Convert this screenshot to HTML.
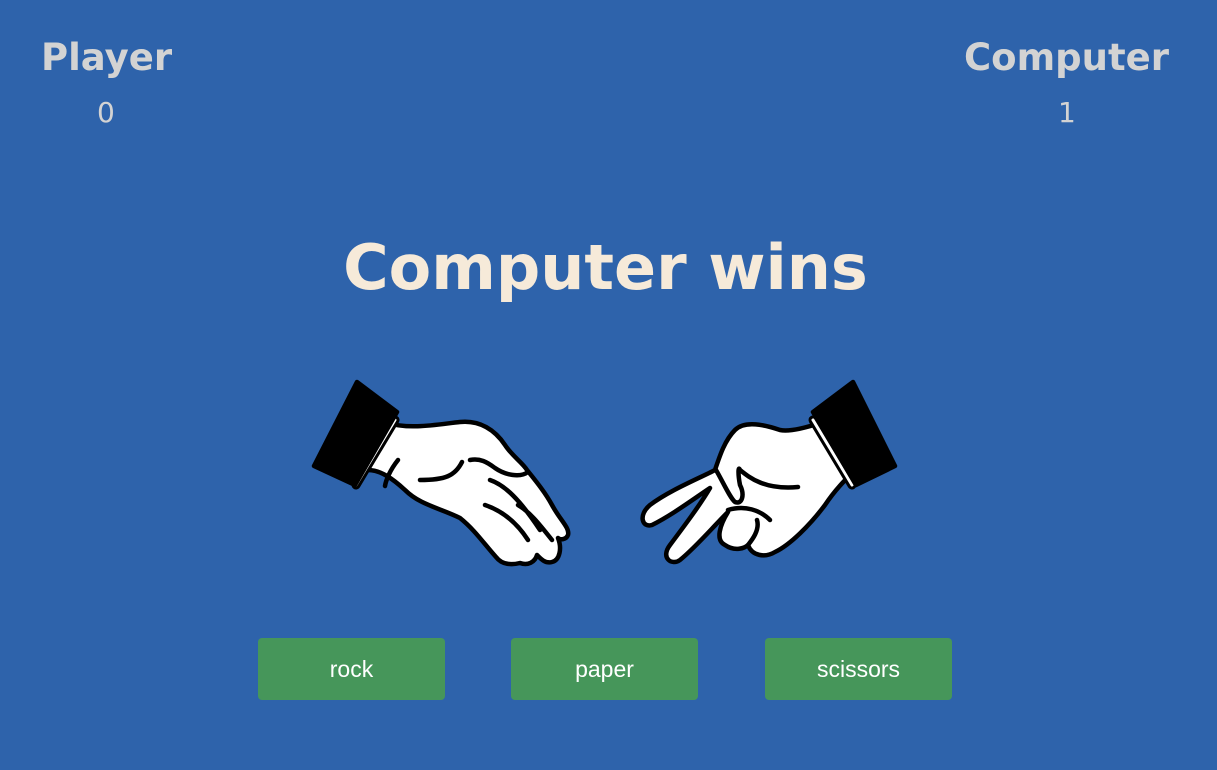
<!DOCTYPE html>
<html><head><meta charset="utf-8"><style>
html,body{margin:0;padding:0;width:1217px;height:770px;background:#2e63ab;overflow:hidden;font-family:"DejaVu Sans","Liberation Sans",sans-serif;}
.lbl{position:absolute;color:#d3d3d3;font-weight:bold;font-size:37px;line-height:1;top:39px;}
.sc{position:absolute;color:#d3d3d3;font-size:28px;line-height:1;top:99px;}
h1{position:absolute;margin:0;left:0;width:1211px;text-align:center;top:233px;color:#f6ead9;font-size:62px;line-height:70px;font-weight:bold;}
.btn{position:absolute;top:638px;width:187px;height:62px;background:#46965a;border-radius:4px;color:#fff;font-family:"Liberation Sans",sans-serif;font-size:23px;line-height:62px;text-align:center;}
svg{position:absolute;left:0;top:0;}
</style></head><body>
<div class="lbl" style="left:41px">Player</div>
<div class="sc" style="left:97px">0</div>
<div class="lbl" style="left:964px">Computer</div>
<div class="sc" style="left:1058px">1</div>
<h1>Computer wins</h1>
<svg width="1217" height="770" viewBox="0 0 1217 770">
<g stroke="#000" stroke-width="4.5" stroke-linejoin="round" stroke-linecap="round" fill="#fff">
<path d="M388,423 C410,430 440,424 460,422 C480,420 495,430 505,445 C512,456 522,462 527,470 C535,480 545,492 552,505 C560,520 570,528 568,535 C566,540 560,540 558,538 C562,548 560,560 552,562 C545,564 540,558 537,555 C535,562 528,566 520,563 C512,565 502,565 496,557 C485,545 475,530 460,518 C440,508 420,505 405,490 C392,478 380,470 368,470 Z"/>
<path d="M528,472 C520,478 505,475 495,468 C487,462 480,458 470,460" fill="none"/>
<path d="M395,420 L356,485" stroke-width="9" fill="none"/>
<path d="M395,420 L356,485" stroke="#fff" stroke-width="3" fill="none"/>
<path d="M357,382 L397,412 L355,485 L314,466 Z" fill="#000"/>
<path d="M462,462 C455,476 445,480 420,480 M398,460 C390,470 386,480 385,486 M485,505 C500,510 515,520 528,540 M490,480 C505,485 520,500 540,530 M518,505 C530,512 540,525 552,540" fill="none"/>
<path d="M820,423 C805,428 790,432 780,430 C765,425 745,420 735,430 C725,440 720,455 715,470 C700,478 670,490 650,505 C638,515 642,528 652,525 C672,515 692,500 710,488 C700,505 685,525 670,545 C660,558 672,566 680,560 C695,548 712,528 728,512 C720,525 715,540 725,545 C735,552 745,548 748,545 C752,556 765,558 775,552 C790,545 810,525 825,505 C835,490 845,480 855,470 Z"/>
<path d="M728,510 C745,505 760,510 770,520 M716,470 C722,480 730,498 735,502 C742,505 745,495 740,485 C738,475 738,465 740,470 M740,470 C750,478 765,490 798,487 M757,520 C760,530 752,540 748,545" fill="none"/>
<path d="M813,420 L852,485" stroke-width="9" fill="none"/>
<path d="M813,420 L852,485" stroke="#fff" stroke-width="3" fill="none"/>
<path d="M853,382 L813,412 L856,485 L895,466 Z" fill="#000"/>
</g>
</svg>
<div class="btn" style="left:258px">rock</div>
<div class="btn" style="left:511px">paper</div>
<div class="btn" style="left:765px">scissors</div>
</body></html>
